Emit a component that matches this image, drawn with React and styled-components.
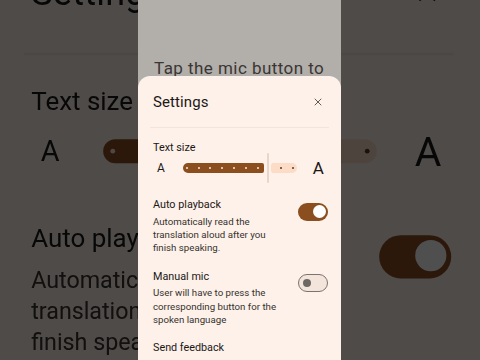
import React from 'react';
import styled, { createGlobalStyle } from 'styled-components';
import { X, ChevronDown } from 'lucide-react';

const GlobalStyle = createGlobalStyle`
    html, body {
        margin: 0;
        padding: 0;
        background: #4f4b47;
    }
    body {
        font-family: Roboto, "Noto Sans", Arial, sans-serif;
    }
`;

const Stage = styled.div`
    position: relative;
    width: 480px;
    height: 360px;
    overflow: hidden;
    background: #4f4b47;
`;

const Backdrop = styled.div`
    position: absolute;
    inset: 0;
    overflow: hidden;
    background: #4f4b47;
`;

const Zoomed = styled.div`
    margin-left: 138px;
    width: 203px;
    transform-origin: 102px 180px;
    transform: scale(2.4);
    filter: brightness(0.31) blur(0.3px);
`;

const Foreground = styled.div`
    position: relative;
    z-index: 1;
    padding-left: 138px;
`;

const PhoneFrame = styled.div`
    position: relative;
    width: 203px;
    height: 360px;
    overflow: hidden;
    background: #b2aeaa;
`;

const PageTop = styled.div`
    display: flex;
    justify-content: flex-end;
    height: 58px;
    padding-right: 14px;
    color: #3e3a37;
    svg {
        margin-top: -11px;
    }
`;

const PageText = styled.div`
    width: 185px;
    padding-left: 16px;
    font-size: 17px;
    letter-spacing: 0.45px;
    line-height: 20px;
    color: #3a3633;
`;

const Sheet = styled.div`
    position: absolute;
    left: 0;
    right: 0;
    top: 76px;
    bottom: 0;
    background: #fdf1e9;
    border-radius: 12px 12px 0 0;
    color: #1b1816;
`;

const Header = styled.div`
    display: flex;
    align-items: center;
    justify-content: space-between;
    height: 51px;
    padding: 0 17px 0 15px;
`;

const Title = styled.div`
    font-size: 15px;
    letter-spacing: 0.1px;
`;

const Divider = styled.div`
    height: 1px;
    margin: 0 12px;
    background: #f3e5dc;
`;

const Body = styled.div`
    padding: 0 13px 0 15px;
`;

const Label = styled.div`
    margin-top: ${(p) => p.$top}px;
    font-size: 10.8px;
    line-height: 15px;
`;

const SliderRow = styled.div`
    display: flex;
    align-items: center;
    height: 26px;
    padding-right: 4px;
`;

const Glyph = styled.span`
    font-size: ${(p) => p.$size}px;
    line-height: 1;
    margin: ${(p) => p.$margin};
    color: #1b1816;
`;

const Track = styled.div`
    display: flex;
    align-items: center;
    width: 114px;
    height: 30px;
`;

const Segment = styled.div`
    display: flex;
    align-items: center;
    gap: 9.8px;
    width: ${(p) => p.$width}px;
    height: 10px;
    padding-left: ${(p) => p.$pad}px;
    box-sizing: border-box;
    background: ${(p) => (p.$active ? '#8a4e1f' : '#fcdcc7')};
    border-radius: ${(p) => (p.$active ? '5px 2px 2px 5px' : '2px 5px 5px 2px')};
`;

const Tick = styled.span`
    width: 2px;
    height: 2px;
    border-radius: 50%;
    flex: none;
    background: ${(p) => (p.$active ? '#fbe6d6' : '#5a3a22')};
`;

const Thumb = styled.div`
    width: 2px;
    height: 30px;
    margin: 0 2.5px;
    border-radius: 1px;
    background: #e8d6ca;
`;

const OptionRow = styled.div`
    display: flex;
    align-items: flex-start;
    justify-content: space-between;
    margin-top: ${(p) => p.$top}px;
`;

const OptionText = styled.div`
    width: 134px;
`;

const OptionTitle = styled.div`
    font-size: 10.8px;
    line-height: 15px;
`;

const OptionDesc = styled.div`
    margin-top: 2.5px;
    font-size: 9.7px;
    line-height: 13.4px;
    color: #36322f;
`;

const Switch = styled.div`
    display: flex;
    align-items: center;
    justify-content: ${(p) => (p.$on ? 'flex-end' : 'flex-start')};
    width: 30px;
    height: 18px;
    margin-top: 5.5px;
    padding: 0 ${(p) => (p.$on ? '2px' : '4px')};
    box-sizing: border-box;
    border-radius: 9px;
    background: ${(p) => (p.$on ? '#8a4e1f' : '#f3e5dc')};
    border: ${(p) => (p.$on ? 'none' : '1.5px solid #7b7370')};
`;

const Knob = styled.span`
    width: ${(p) => (p.$on ? 13 : 8)}px;
    height: ${(p) => (p.$on ? 13 : 8)}px;
    border-radius: 50%;
    background: ${(p) => (p.$on ? '#ffffff' : '#6e6865')};
`;

const Feedback = styled.div`
    margin-top: 14px;
    font-size: 10.8px;
    line-height: 15px;
`;

const activeTicks = [0, 1, 2, 3, 4, 5, 6];
const idleTicks = [0, 1];

const Phone = () => (
    <PhoneFrame>
        <PageTop>
            <ChevronDown size={14} strokeWidth={1.8} />
        </PageTop>
        <PageText>Tap the mic button to start translating</PageText>
        <Sheet>
            <Header>
                <Title>Settings</Title>
                <X size={12} strokeWidth={1.6} color="#3a3532" />
            </Header>
            <Divider />
            <Body>
                <Label $top={12}>Text size</Label>
                <SliderRow>
                    <Glyph $size={12} $margin="0 18px 0 4px">A</Glyph>
                    <Track>
                        <Segment $active $width={83} $pad={3}>
                            {activeTicks.map((t) => (
                                <Tick key={t} $active />
                            ))}
                        </Segment>
                        <Thumb />
                        <Segment $width={26} $pad={9}>
                            {idleTicks.map((t) => (
                                <Tick key={t} />
                            ))}
                        </Segment>
                    </Track>
                    <Glyph $size={17} $margin="0 0 0 16px">A</Glyph>
                </SliderRow>
                <OptionRow $top={16}>
                    <OptionText>
                        <OptionTitle>Auto playback</OptionTitle>
                        <OptionDesc>
                            Automatically read the translation aloud after you finish speaking.
                        </OptionDesc>
                    </OptionText>
                    <Switch $on>
                        <Knob $on />
                    </Switch>
                </OptionRow>
                <OptionRow $top={14}>
                    <OptionText>
                        <OptionTitle>Manual mic</OptionTitle>
                        <OptionDesc>
                            User will have to press the corresponding button for the spoken language
                        </OptionDesc>
                    </OptionText>
                    <Switch>
                        <Knob />
                    </Switch>
                </OptionRow>
                <Feedback>Send feedback</Feedback>
            </Body>
        </Sheet>
    </PhoneFrame>
);

const App = () => {
    return (
        <Stage>
            <GlobalStyle />
            <Backdrop>
                <Zoomed>
                    <Phone />
                </Zoomed>
            </Backdrop>
            <Foreground>
                <Phone />
            </Foreground>
        </Stage>
    );
};

export default App;
